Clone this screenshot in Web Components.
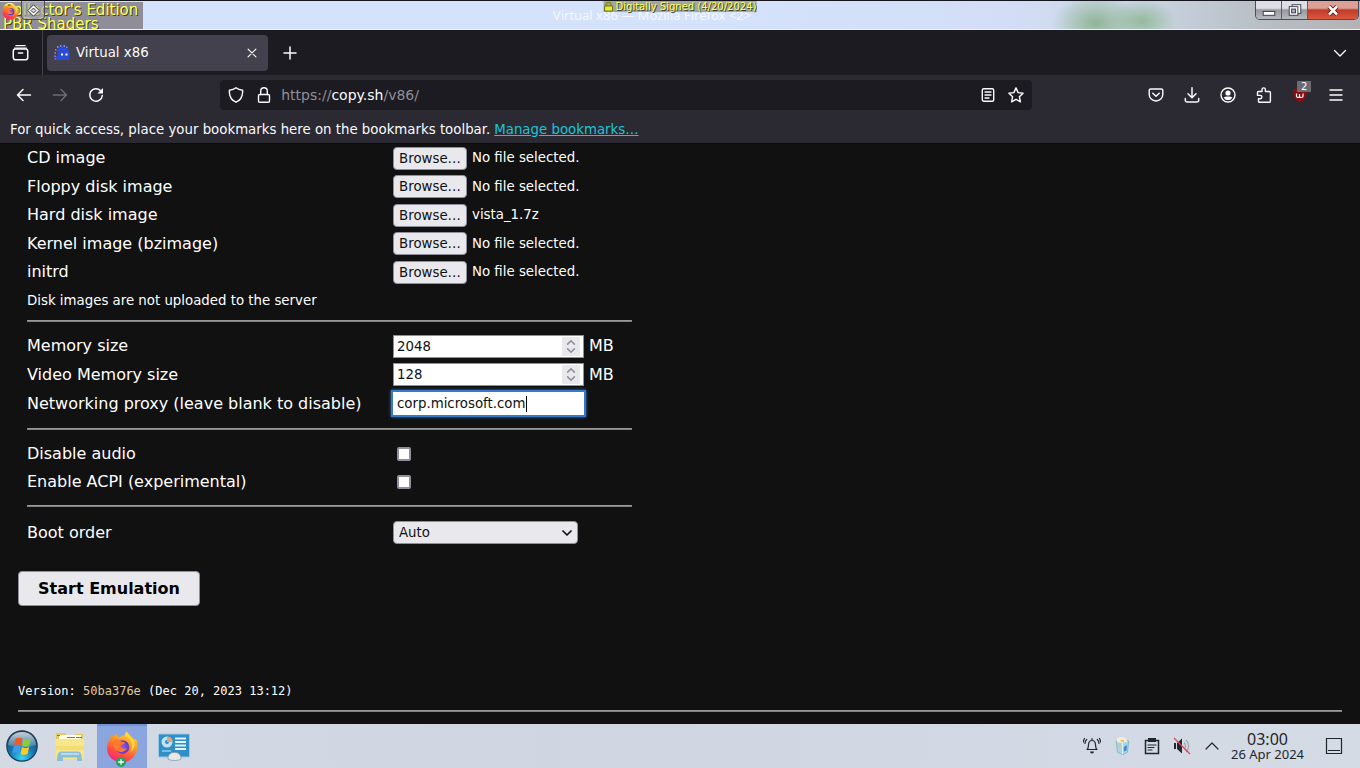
<!DOCTYPE html>
<html lang="en">
<head>
<meta charset="utf-8">
<title>Virtual x86 — Mozilla Firefox</title>
<style>
  html, body { height: 100%; }
  body { margin: 0; background: #111; overflow: hidden; font-family: "DejaVu Sans", sans-serif; }
</style>
</head>
<body>
<desktop-screen>
  <window-title slot="title" caption="Virtual x86 — Mozilla Firefox &lt;2&gt;"></window-title>
  <tab-strip slot="tabs" label="Virtual x86"></tab-strip>
  <nav-bar slot="nav"></nav-bar>
  <bookmark-bar slot="bookmarks"></bookmark-bar>
  <emulator-page slot="page"></emulator-page>
  <task-bar slot="taskbar"></task-bar>
</desktop-screen>

<script>
const define = (name, html, setup) => {
  const tpl = document.createElement('template');
  tpl.innerHTML = html;
  customElements.define(name, class extends HTMLElement {
    constructor() {
      super();
      this.attachShadow({ mode: 'open' }).append(tpl.content.cloneNode(true));
    }
    connectedCallback() {
      if (this.ready) return;
      this.ready = true;
      if (setup) setup(this, this.shadowRoot);
    }
  });
};

/* ---- icons ---- */
const stroke = (d, w = 1.5) => `<path d="${d}" fill="none" stroke="currentColor" stroke-width="${w}" stroke-linecap="round" stroke-linejoin="round"/>`;
const firefoxArt = `
  <defs>
    <linearGradient id="fx" x1=".8" y1="0" x2=".3" y2="1"><stop offset="0" stop-color="#ffe14a"/><stop offset=".4" stop-color="#ff9422"/><stop offset=".75" stop-color="#ff4747"/><stop offset="1" stop-color="#e9257f"/></linearGradient>
    <radialGradient id="fg"><stop offset="0" stop-color="#9059ff"/><stop offset="1" stop-color="#5b3bc4"/></radialGradient>
  </defs>
  <path d="M8 5.4 10.6 3c.6 1.600 1.400 2.600 3 3.200C16 5 17 4 18.600 4.600 19 3 19.500 1.500 20.500.5c1.500 3.500 5 5 7.500 8.500l2-1c1.500 3 1.800 6.500 1 10.500C29.500 26 23.500 31.500 16 31.500S1.500 26 1 18C.8 14 2 11 4 8.500L5 4.500z" fill="url(#fx)"/>
  <circle cx="16.500" cy="16" r="6.800" fill="url(#fg)"/>
  <path d="M7.500 9.500c2.500-1.500 5-1 7 .500 1.500 1.200 3.500.800 4.500 1.500-.5 2-4 2-4.500 3.500.500 2.500 4 3.500 6.500 2-1.500 3.500-6 5-9.500 3-4-2-5.500-6.500-4-10.500z" fill="#ff7a2c"/>
  <path d="M19 4.500c6 3 9 9 5.500 17 6-5 5-12 1.500-15l-5.500-6z" fill="#ffd43c"/>`;
const ICONS = {
  view: ['0 0 20 20', stroke('M4.500 1.800h11M3 4.800h14') + `<rect x="1.500" y="6" width="17" height="12.500" rx="2.500" fill="none" stroke="currentColor" stroke-width="1.800"/>` + stroke('M7.500 10.500h5', 1.8)],
  close: ['0 0 16 16', stroke('M3.500 3.500l9 9M12.500 3.500l-9 9', 1.4)],
  plus: ['0 0 16 16', stroke('M8 2v12M2 8h12', 1.5)],
  chevron: ['0 0 16 16', stroke('M2.500 5.500 8 11l5.500-5.500', 1.4)],
  back: ['0 0 16 16', stroke('M14.500 8H1.500M7 2.500 1.500 8 7 13.500')],
  forward: ['0 0 16 16', stroke('M1.500 8h13M9 2.500 14.500 8 9 13.500')],
  reload: ['0 0 16 16', stroke('M14.300 8.500A6.300 6.300 0 1 1 12.500 3.500') + `<path d="M15 1v5.500H9.500z" fill="currentColor"/>`],
  shield: ['0 0 16 16', stroke('M8 .8c1.800 1.500 4.200 2.200 6.600 2.400.4 5.300-1.600 9.800-6.600 12-5-2.200-7-6.700-6.600-12C3.800 3 6.200 2.300 8 .8z', 1.4)],
  lock: ['0 0 16 16', `<rect x="2.500" y="7.500" width="11" height="7.700" rx="1.300" fill="none" stroke="currentColor" stroke-width="1.400"/>` + stroke('M4.700 7.500V4a3.300 3.300 0 0 1 6.600 0v3.500', 1.4)],
  reader: ['0 0 16 16', `<rect x="2.300" y="1.700" width="11.400" height="12.600" rx="1.500" fill="none" stroke="currentColor" stroke-width="1.400"/>` + stroke('M5 5h6M5 8h6M5 11h4', 1.3)],
  star: ['0 0 16 16', stroke('M8 .9l2.100 4.700 5 .6-3.700 3.500 1 5.100L8 12.300l-4.400 2.500 1-5.100L.9 6.200l5-.6z', 1.4)],
  pocket: ['0 0 16 16', stroke('M2.500 2h11a1.300 1.300 0 0 1 1.300 1.300V7.500a6.800 6.500 0 0 1-13.600 0V3.300A1.300 1.300 0 0 1 2.500 2z', 1.4) + stroke('M4.800 6.300 8 9.300l3.200-3', 1.5)],
  download: ['0 0 16 16', stroke('M8 .8v9.700M4 6.800l4 4 4-4M1.300 11.500v1.700a1.800 1.800 0 0 0 1.800 1.800h9.800a1.800 1.800 0 0 0 1.800-1.800v-1.700')],
  account: ['0 0 16 16', `<circle cx="8" cy="8" r="7" fill="none" stroke="currentColor" stroke-width="1.400"/><circle cx="8" cy="6" r="2.600" fill="currentColor"/><path d="M3.800 10.200c2-1 6.400-1 8.400 0-.6 2-2.200 2.900-4.200 2.900s-3.600-.9-4.200-2.900z" fill="currentColor"/>`],
  extension: ['0 0 16 16', stroke('M2.500 4.500h3.500V2.600a1.700 1.700 0 0 1 3.400 0v1.900h4a1 1 0 0 1 1 1v8.700a1 1 0 0 1-1 1h-9.900a1 1 0 0 1-1-1v-2.400h1.700a1.700 1.700 0 0 0 0-3.400H1.500V5.500a1 1 0 0 1 1-1z', 1.4)],
  menu: ['0 0 16 16', stroke('M2 3h12M2 8h12M2 13h12', 1.4)],
  ublock: ['0 0 16 16', `<path d="M8 0c2.500 1.500 4.500 2 6.800 2.100.4 6.300-1.400 10.900-6.800 13.900C2.600 13 .8 8.400 1.200 2.100 3.500 2 5.500 1.500 8 0z" fill="#8b0b10"/><path d="M4.500 6.500v2.800c0 1.600 3 1.600 3 0V7M7.500 9.300c0 1.600 3.500 1.600 3.500 0V6.500" fill="none" stroke="#fff" stroke-width="1.200"/>`],
  godzilla: ['0 0 16 16', `<path d="M4 4 2.500 6.500 4 7 3.500 10 1.500 13 2 15h13l1-5-1-4-2-3-3-1-2-1-1 2-2-1z" fill="#2a4bd8"/><path d="M3 1h1.500v2H3zM6 0h1.500v2H6zM9.500 0H11v2H9.500zM1 4h1.500v1.500H1zM12 1.500h1.500V3H12z" fill="#7f8be0"/><path d="M.5 7H2v2H.5zM0 10.500h2v1.500H0zM.5 13H2v1.500H.5z" fill="#8a6fd0"/><path d="M7 8.500h2v2H7zM11.500 8.500h2v2h-2z" fill="#fff"/>`],
  firefox: ['0 0 32 32', firefoxArt],
  start: ['0 0 32 32', `<defs><radialGradient id="o" cx=".5" cy=".9" r=".9"><stop offset="0" stop-color="#35d6f5"/><stop offset=".45" stop-color="#1578b4"/><stop offset="1" stop-color="#24445f"/></radialGradient><linearGradient id="gl" x2="0" y2="1"><stop stop-color="#fff" stop-opacity=".75"/><stop offset="1" stop-color="#fff" stop-opacity=".15"/></linearGradient></defs>
    <circle cx="16" cy="16" r="15.200" fill="url(#o)" stroke="#1d3c52" stroke-width="1.200"/><path d="M2 15C3 6 9 2 16 2s13 4 14 13c-8 3-20 3-28 0z" fill="url(#gl)"/>
    <path d="M9.500 8.500c2.700-1.300 4.900-1 6.900 0l-1.300 7c-2.200-1.200-4.300-1.200-7.100 0z" fill="#ee5a24"/><path d="M17.400 9c2.300 1.200 4.700 1 7.600-.2l-1.700 7c-2.500 1.200-4.900 1.200-7.200 0z" fill="#8ccb3a"/><path d="M7.600 16.500c2.600-1.200 4.900-1 7.100 0l-1.400 6.800c-2.200-1-4.400-1.100-7.100 0z" fill="#3e9be8"/><path d="M15.800 17c2.300 1.200 4.700 1.200 7.300 0l-1.500 6.900c-2.700 1.200-4.900 1.200-7.100 0z" fill="#fbc926"/>`],
  folder: ['0 0 32 32', `<path d="M2 3h9l2 3h8v-2h8v8H2z" fill="#e6c95c"/><path d="M5 5h22v6H5z" fill="#fffbe0"/><path d="M3 5.500h3M13 7.500h8M22 7.500h6" stroke="#8a7a40" stroke-width="1"/><path d="M1.500 9h28.500v20h-28.500z" fill="#f7e78c"/><path d="M1.500 16h28.500v4h-28.500z" fill="#f3dc72"/><path d="M3 31c0-6 1-9.500 4-9.500h17c3 0 4 3.500 4 9.500h-5v-3.500H9V31z" fill="#7fb9de" opacity=".9"/><path d="M7 24h18" stroke="#c5e4f5" stroke-width="1.500"/>`],
  control: ['0 0 32 32', `<rect x=".5" y="4" width="31" height="23" rx="1" fill="#2f8fc6" stroke="#9cc9e4"/><circle cx="9" cy="12" r="5.500" fill="#bfe2f5"/><circle cx="9" cy="12" r="2" fill="#2f8fc6"/><path d="M9 12V6.500a5.500 5.500 0 0 1 5.500 5.500z" fill="#f0a070"/><path d="M17 8.500h11M17 12h11M17 15.500h11M17 19h11" stroke="#e4f4fc" stroke-width="1.800"/><path d="M4 21h9" stroke="#8fd0ef" stroke-width="1.500"/><path d="M10 29c0-4 2-6.500 6.500-6.500S23 25 23 29c-2 2-11 2-13 0z" fill="#e6e8ea" stroke="#8b98a3" stroke-width=".8"/>`],
  bell: ['0 0 18 18', stroke('M4 12.500c1.500-1 1.300-3 1.500-5C5.700 4.800 7 3.500 9 3.500s3.300 1.300 3.500 4c.2 2 0 4 1.500 5zM9 1.500v2M3.700 2.500C2.500 3.500 2 5 2 6.500M14.300 2.500c1.200 1 1.700 2.500 1.700 4M1.500 1.500C.8 2.500.5 3.500.5 5M16.500 1.500c.7 1 1 2 1 3.500', 1.2) + `<path d="M7 14.500h4a2 2 0 0 1-4 0z" fill="currentColor"/>`],
  recycle: ['0 0 18 20', `<path d="M2.500 4.500l11-1.500 3 1.500-1.500 12.500-5 2.500L4 17z" fill="#a8d5ea" stroke="#6fabc9" stroke-width=".8"/><path d="M4 1l5-1 5 2 1 3-6 2-6-2z" fill="#f3efd8"/><path d="M6 4l5-1v3z" fill="#e2b860"/><path d="M9.500 7v12" stroke="#e9f7fd"/><path d="M5 8.500l3 1-1 3.500-2-.5z" fill="#e6c27a"/><path d="M11 11l3.500-2-.5 6-3 1z" fill="#3f8ad0"/>`],
  clipboard: ['0 0 18 18', `<path d="M2.500 3.500h13v13h-13z" fill="none" stroke="currentColor" stroke-width="1.500"/><path d="M5 1h8v4H5z" fill="currentColor"/>` + stroke('M5 8h8M5 10.500h6M5 13h4', 1.2)],
  muted: ['0 0 18 18', `<path d="M1 6h2v6H1zM4 6l5-4.500v15L4 12z" fill="currentColor"/><path d="M11 5.500c2 2 2 5 0 7M13 3c3.500 3 3.500 9 0 12" fill="none" stroke="#98a0aa" stroke-width="1.100"/><path d="M1 1l16 16" stroke="#d24a62" stroke-width="1.300"/>`],
  up: ['0 0 18 18', stroke('M3 12 9 6l6 6', 1.2)],
  desktop: ['0 0 18 18', `<path d="M1.500 1.500h15v15h-15zM3 13.500h12" fill="none" stroke="currentColor" stroke-width="1.200"/>`],
  pin: ['0 0 16 16', `<path d="M8 1l7 7-7 7-7-7z" fill="#fff" stroke="#333" stroke-width="1.200"/><path d="M8 5l3 3-3 3-3-3z" fill="#ddd" stroke="#333" stroke-width="1.200"/>`],
  padlock: ['0 0 10 10', `<path d="M2.500 4V2.500a2.500 2 0 0 1 5 0V4" fill="none" stroke="#8a8a20" stroke-width="1.500"/><path d="M1 4h8v5H1z" fill="#e6ef2e" stroke="#5c5c10" stroke-width=".8"/>`],
  minimize: ['0 0 26 18', `<rect x="7.500" y="10.500" width="12" height="4" fill="#fff" stroke="#3a3f4a"/>`],
  restore: ['0 0 26 18', `<rect x="10.500" y="3.500" width="9" height="9" fill="#fff" stroke="#3a3f4a"/><rect x="7.500" y="5.500" width="9" height="9" fill="#fff" stroke="#3a3f4a"/><rect x="10" y="8" width="4" height="4" fill="#aab" stroke="#3a3f4a"/>`],
  quit: ['0 0 50 18', `<path d="M21 5.500l8 8M29 5.500l-8 8" stroke="#5b1a14" stroke-width="4.500"/><path d="M21 5.500l8 8M29 5.500l-8 8" stroke="#fff" stroke-width="2.500"/>`],
  spin: ['0 0 18 20', `<path d="M5.500 7.500 9 4l3.500 3.500M5.500 12.500 9 16l3.500-3.500" fill="none" stroke="#8f8f9d" stroke-width="1.700" stroke-linecap="round"/>`],
  down: ['0 0 12 12', stroke('M2 4l4 4 4-4', 1.7)],
  added: ['0 0 10 10', `<circle cx="5" cy="5" r="5" fill="#27a35c"/><path d="M5 2.200v5.600M2.200 5h5.600" stroke="#fff" stroke-width="1.300"/>`],
};
define('ui-icon', `<style>
  :host { display: inline-block; width: 16px; height: 16px; flex: none; }
  svg { display: block; width: 100%; height: 100%; }
</style>`, (el, root) => {
  const [box, art] = ICONS[el.getAttribute('name')];
  root.innerHTML += `<svg viewBox="${box}" aria-hidden="true">${art}</svg>`;
});

define('tool-button', `<style>
  :host { display: inline-flex; flex: none; }
  button { width: 32px; height: 32px; padding: 0; border: 0; border-radius: 4px; background: none;
    color: inherit; display: flex; align-items: center; justify-content: center; position: relative; }
  span { position: absolute; left: 13px; top: 2px; background: #6b6b70; color: #fff; font: 10px/11px "DejaVu Sans", sans-serif; padding: 0 4px; }
</style><button type="button"><slot></slot></button>`, (el, root) => {
  const b = root.querySelector('button');
  b.setAttribute('aria-label', el.getAttribute('label'));
  if (el.hasAttribute('badge')) {
    const s = document.createElement('span');
    s.textContent = el.getAttribute('badge');
    b.append(s);
  }
});

/* ---- window frame ---- */
define('desktop-screen', `<style>
  :host { display: flex; flex-direction: column; height: 100vh; }
  .page { flex: 1; min-height: 0; overflow: hidden; }
</style>
<slot name="title"></slot><slot name="tabs"></slot><slot name="nav"></slot><slot name="bookmarks"></slot>
<div class="page"><slot name="page"></slot></div>
<slot name="taskbar"></slot>`);

define('window-title', `<style>
  :host { display: flex; justify-content: space-between; position: relative; height: 30px; flex: none; overflow: hidden; box-sizing: border-box;
    border-top: 1px solid #15161d; border-bottom: 1px solid #eef1fb;
    background:
      radial-gradient(ellipse 44px 30px at 1096px 22px, #8fb596 0, #8fb59600 100%),
      radial-gradient(ellipse 34px 22px at 1142px 20px, #93b99b 0, #93b99b00 100%),
      linear-gradient(90deg, #d5e2fb 0 54%, #d3ddf6 74%, #cbd6e4 84%, #b9c0c6 92%, #b4b2b4 100%); }
  .overlay { background: #8f8d98; color: #ffff5c; text-shadow: 1px 1px #3d3d16; font: 15px/14px "DejaVu Sans", sans-serif; padding: 1px 5px 0 3px; margin-top: 1px; white-space: nowrap; }
  .signed { position: absolute; left: 50%; top: 0; transform: translateX(-50%); display: flex; align-items: center; gap: 2px;
    background: #a3a79f; color: #ffff5c; text-shadow: 1px 1px #3d3d16; font: 10px/11px "DejaVu Sans", sans-serif; white-space: nowrap; }
  .signed ui-icon { width: 10px; height: 10px; }
  .caption { position: absolute; left: 0; right: 0; top: 5px; text-align: center; color: #f4f8ff; font: 13px/18px "Noto Sans", sans-serif; padding-right: 56px; }
  .app { position: absolute; left: 2px; top: 2px; width: 17px; height: 17px; }
  .pin { position: absolute; left: 21px; top: -1px; width: 24px; height: 20px; padding: 0; display: grid; place-items: center;
    border: 1px solid #4c4c52; border-radius: 0 0 4px 4px; background: #a9a8b0aa; }
  .pin ui-icon { width: 13px; height: 13px; }
  .controls { display: flex; height: 19px; margin-right: 1px; border: 1px solid #4a4d55; border-top: 0; border-radius: 0 0 5px 5px; overflow: hidden; box-sizing: border-box; }
  .controls button { width: 26px; padding: 0; border: 0; border-right: 1px solid #5b5e66; background: linear-gradient(#dcdfe3 0 40%, #97999f 50%, #b6b9be); }
  .controls button:last-child { width: 50px; border: 0; background: linear-gradient(#dba096 0 40%, #c23a28 50%, #d9583f); }
  .controls ui-icon { width: 100%; height: 18px; }
</style>
<div class="overlay"><div>Collector's Edition</div><div>PBR Shaders</div></div>
<div class="caption"></div>
<div class="signed"><ui-icon name="padlock"></ui-icon><span>Digitally Signed (4/20/2024)</span></div>
<ui-icon class="app" name="firefox"></ui-icon>
<button class="pin" aria-label="Keep above"><ui-icon name="pin"></ui-icon></button>
<div class="controls">
  <button aria-label="Minimize"><ui-icon name="minimize"></ui-icon></button>
  <button aria-label="Restore"><ui-icon name="restore"></ui-icon></button>
  <button aria-label="Close"><ui-icon name="quit"></ui-icon></button>
</div>`, (el, root) => { root.querySelector('.caption').textContent = el.getAttribute('caption'); });

define('tab-strip', `<style>
  :host { display: flex; align-items: center; height: 45px; flex: none; background: #1c1b22; color: #fbfbfe; padding-right: 4px; }
  .view { display: flex; align-self: stretch; align-items: center; padding: 0 6px 0 4px; border-right: 1px solid #45444d; margin-right: 4px; }
  .view ui-icon { width: 17px; height: 17px; }
  .tab { display: flex; align-items: center; width: 221px; height: 36px; box-sizing: border-box; padding: 0 0 0 7px; border-radius: 4px; background: #42414d; }
  .tab span { flex: 1; margin-left: 6px; font-size: smaller; }
  .tab ui-icon.x { width: 14px; height: 14px; }
  .gap { flex: 1; }
  .tab + tool-button { margin-left: 6px; }
</style>
<div class="view"><tool-button label="Firefox View"><ui-icon name="view"></ui-icon></tool-button></div>
<div class="tab"><ui-icon name="godzilla"></ui-icon><span></span><tool-button label="Close tab"><ui-icon class="x" name="close"></ui-icon></tool-button></div>
<tool-button label="New tab"><ui-icon name="plus"></ui-icon></tool-button>
<div class="gap"></div>
<tool-button label="List all tabs"><ui-icon name="chevron"></ui-icon></tool-button>`,
  (el, root) => { root.querySelector('.tab span').textContent = el.getAttribute('label'); });

define('nav-bar', `<style>
  :host { display: flex; align-items: center; height: 40px; flex: none; background: #2b2a33; color: #fbfbfe; padding: 0 8px; }
  .group { display: flex; gap: 4px; }
  .space { flex: 2; }
  .off { color: #6d6c74; }
  .url { flex: 15; min-width: 0; display: flex; align-items: center; height: 30px; border-radius: 4px; background: #1c1b22; font-size: 14px; }
  .icons { display: flex; }
  .url tool-button { margin-right: -4px; }
  .url label { flex: 1; position: relative; margin-left: 5px; color: #8f8f98; display: grid; align-items: center; }
  .url label > * { grid-area: 1 / 1; }
  .url b { font-weight: normal; color: #fbfbfe; }
  .url input { width: 100%; height: 28px; box-sizing: border-box; padding: 0; border: 0; background: none; color: transparent; outline: 0; font: inherit; }
  .url .last { margin-right: 0; }
</style>
<div class="group">
  <tool-button label="Back"><ui-icon name="back"></ui-icon></tool-button>
  <tool-button label="Forward" class="off"><ui-icon name="forward"></ui-icon></tool-button>
  <tool-button label="Reload"><ui-icon name="reload"></ui-icon></tool-button>
</div>
<div class="space"></div>
<div class="url">
  <tool-button label="Tracking protection"><ui-icon name="shield"></ui-icon></tool-button>
  <tool-button label="Site information"><ui-icon name="lock"></ui-icon></tool-button>
  <label><span>https://<b>copy.sh</b>/v86/</span><input type="text" aria-label="Address"></label>
  <tool-button label="Reader view"><ui-icon name="reader"></ui-icon></tool-button>
  <tool-button class="last" label="Bookmark this page"><ui-icon name="star"></ui-icon></tool-button>
</div>
<div class="space"></div>
<div class="group">
  <tool-button label="Save to Pocket"><ui-icon name="pocket"></ui-icon></tool-button>
  <tool-button label="Downloads"><ui-icon name="download"></ui-icon></tool-button>
  <tool-button label="Account"><ui-icon name="account"></ui-icon></tool-button>
  <tool-button label="Extensions"><ui-icon name="extension"></ui-icon></tool-button>
  <tool-button label="uBlock" badge="2"><ui-icon name="ublock"></ui-icon></tool-button>
  <tool-button label="Menu"><ui-icon name="menu"></ui-icon></tool-button>
</div>`);

define('bookmark-bar', `<style>
  :host { display: flex; align-items: center; gap: 4px; height: 28px; flex: none; background: #2b2a33; color: #fbfbfe; padding: 0 10px; font-size: smaller; border-bottom: 1px solid #0c0c0d; white-space: nowrap; }
  a { color: #1cc4d8; }
</style>
<span>For quick access, place your bookmarks here on the bookmarks toolbar.</span><a href="#">Manage bookmarks…</a>`);

/* ---- emulator settings ---- */
define('field-row', `<style>
  :host { display: grid; grid-template-columns: 366px auto; align-items: center; justify-content: start; font-size: 16px; line-height: 20px; }
  .control { display: flex; align-items: center; height: 23px; }
  button, input, select { font-family: inherit; }
  .browse { width: 74px; height: 23px; padding: 0; border: 1px solid #8f8f9d; border-radius: 4px; background: #e9e9ed; color: #111; }
  output { font-size: smaller; margin-left: 5px; }
  .box { display: flex; align-items: center; box-sizing: border-box; width: 191px; height: 23px; padding: 0 3px; border: 1px solid #8f8f9d; background: #fff; color: #111; }
  .box input { min-width: 0; padding: 0; border: 0; outline: 0; background: none; color: inherit; appearance: textfield; }
  .box input[type=number] { flex: 1; }
  input::-webkit-inner-spin-button { display: none; }
  .spin { width: 18px; height: 19px; padding: 0; border: 0; background: #e9e9ed; display: flex; }
  .spin ui-icon { width: 18px; height: 19px; }
  .unit { margin-left: 5px; }
  .focus { border-color: #fff; box-shadow: 0 0 0 2px #3a78c8, 0 0 3px 2px #3a78c8; }
  .focus input { field-sizing: content; caret-color: transparent; }
  .focus i { width: 1px; height: 16px; background: #000; }
  input[type=checkbox] { appearance: none; width: 14px; height: 14px; margin: 0 0 0 4px; border: 2px solid #8f8f9d; border-radius: 2px; background: #fff; }
  .pick { position: relative; display: flex; color: #111; }
  .pick select { appearance: none; width: 185px; height: 23px; padding: 0 5px; border: 1px solid #8f8f9d; border-radius: 4px; background: #e9e9ed; color: inherit; }
  .pick ui-icon { position: absolute; right: 5px; top: 6px; width: 12px; height: 12px; pointer-events: none; }
</style><label for="f"></label><div class="control"></div>`, (el, root) => {
  const v = el.getAttribute('value') || '';
  root.querySelector('label').textContent = el.getAttribute('label');
  root.querySelector('.control').innerHTML = {
    file: `<button class="browse" id="f" type="button">Browse…</button><output for="f">${v || 'No file selected.'}</output><input type="file" hidden>`,
    number: `<div class="box"><input id="f" type="number" value="${v}"><button class="spin" type="button" tabindex="-1" aria-label="Step"><ui-icon name="spin"></ui-icon></button></div><span class="unit">MB</span>`,
    text: `<div class="box focus"><input id="f" type="text" value="${v}"><i></i></div>`,
    check: `<input id="f" type="checkbox">`,
    select: `<div class="pick"><select id="f"><option>${v}</option></select><ui-icon name="down"></ui-icon></div>`,
  }[el.getAttribute('type')];
  const browse = root.querySelector('.browse');
  if (browse) browse.onclick = () => root.querySelector('[type=file]').click();
});

define('field-group', `<style>
  :host { display: grid; grid-auto-rows: 1fr; align-items: center; }
</style><slot></slot>`);

define('emulator-page', `<style>
  :host { display: block; background: #111; color: #fff; padding: 0 18px; }
  form { width: 605px; margin-left: 9px; }
  hr { height: 0; margin: 9px 0 10px; border: 1px solid #808080; border-top-color: #9a9a9a; }
  .files { min-height: 171px; }
  .memory { min-height: 86px; }
  .flags { min-height: 56px; }
  .boot { min-height: 31px; }
  .files + hr { margin-top: 5px; }
  .memory + hr { margin-top: 10px; }
  .start { display: block; width: 182px; height: 35px; margin: 23px 0 0; padding: 0; border: 1px solid #8f8f9d; border-radius: 4px; background: #e9e9ed; color: #000; font: bold 16px "DejaVu Sans", sans-serif; }
  .version { margin-top: 77px; font: 12px/16px "DejaVu Sans Mono", monospace; }
  .version a { color: #e0c9a0; text-decoration: none; }
  .version + hr { margin: 11px 0 0; }
</style>
<form id="settings">
  <field-group class="files">
    <field-row type="file" label="CD image"></field-row>
    <field-row type="file" label="Floppy disk image"></field-row>
    <field-row type="file" label="Hard disk image" value="vista_1.7z"></field-row>
    <field-row type="file" label="Kernel image (bzimage)"></field-row>
    <field-row type="file" label="initrd"></field-row>
    <small>Disk images are not uploaded to the server</small>
  </field-group>
  <hr>
  <field-group class="memory">
    <field-row type="number" label="Memory size" value="2048"></field-row>
    <field-row type="number" label="Video Memory size" value="128"></field-row>
    <field-row type="text" label="Networking proxy (leave blank to disable)" value="corp.microsoft.com"></field-row>
  </field-group>
  <hr>
  <field-group class="flags">
    <field-row type="check" label="Disable audio"></field-row>
    <field-row type="check" label="Enable ACPI (experimental)"></field-row>
  </field-group>
  <hr>
  <field-group class="boot">
    <field-row type="select" label="Boot order" value="Auto"></field-row>
  </field-group>
</form>
<button class="start" type="button">Start Emulation</button>
<div class="version">Version: <a href="#">50ba376e</a> (Dec 20, 2023 13:12)</div>
<hr>`);

/* ---- desktop panel ---- */
define('task-bar', `<style>
  :host { display: flex; align-items: center; height: 44px; flex: none; background: linear-gradient(90deg, #d3dae4, #cfd6e2 40%, #d4dbe5); color: #22262c; font-family: "Noto Sans", sans-serif; }
  button { padding: 0; border: 0; background: none; color: inherit; display: grid; place-items: center; height: 44px; position: relative; }
  .apps { display: flex; gap: 2px; flex: 1; }
  .apps button { width: 50px; }
  .apps .menu { width: 43px; }
  .apps ui-icon { width: 32px; height: 32px; }
  .apps .active { background: #8ba5df; border-top: 2px solid #7291d8; }
  .apps .badge { position: absolute; left: 19px; top: 31px; width: 10px; height: 10px; }
  .tray { display: flex; }
  .tray button { width: 30px; }
  .tray ui-icon { width: 18px; height: 18px; }
  .clock { width: 81px; text-align: center; font-size: 13px; line-height: 14px; white-space: nowrap; }
  .clock b { display: block; font-weight: normal; font-size: 16px; line-height: 16px; }
  .show { width: 52px; }
  .show ui-icon { width: 18px; height: 18px; }
</style>
<div class="apps">
  <button class="menu" aria-label="Start"><ui-icon name="start"></ui-icon></button>
  <button aria-label="Files"><ui-icon name="folder"></ui-icon></button>
  <button class="active" aria-label="Firefox"><ui-icon name="firefox"></ui-icon><ui-icon class="badge" name="added"></ui-icon></button>
  <button aria-label="System settings"><ui-icon name="control"></ui-icon></button>
</div>
<div class="tray">
  <button aria-label="Notifications"><ui-icon name="bell"></ui-icon></button>
  <button aria-label="Trash"><ui-icon name="recycle"></ui-icon></button>
  <button aria-label="Clipboard"><ui-icon name="clipboard"></ui-icon></button>
  <button aria-label="Volume"><ui-icon name="muted"></ui-icon></button>
  <button aria-label="Show hidden icons"><ui-icon name="up"></ui-icon></button>
</div>
<div class="clock"><b>03:00</b>26 Apr 2024</div>
<button class="show" aria-label="Show desktop"><ui-icon name="desktop"></ui-icon></button>`);
</script>
</body>
</html>
